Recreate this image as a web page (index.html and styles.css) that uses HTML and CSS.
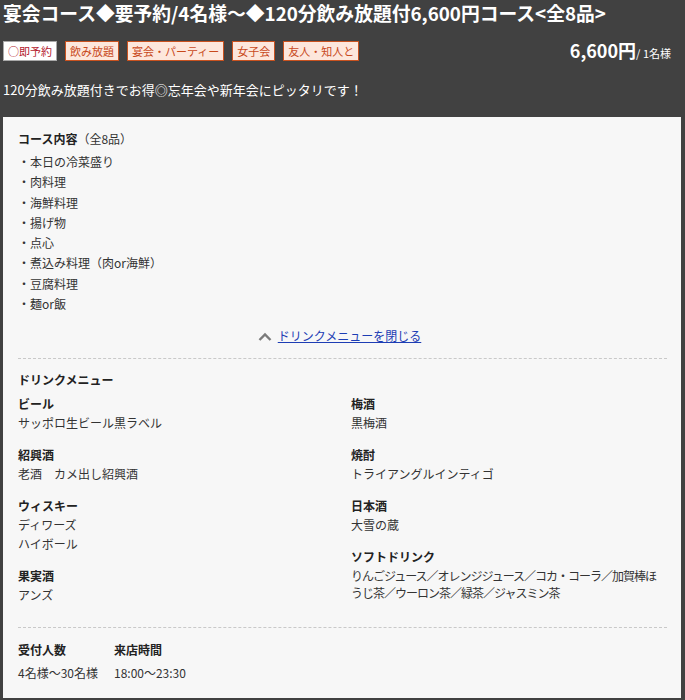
FILE: index.html
```html
<!DOCTYPE html>
<html lang="ja">
<head>
<meta charset="utf-8">
<title>宴会コース</title>
<link rel="stylesheet" href="styles.css">
</head>
<body>
<div class="page">
  <h1 class="title">宴会コース◆要予約/4名様～◆120分飲み放題付6,600円コース&lt;全8品&gt;</h1>
  <div class="tagrow">
    <ul class="tags">
      <li class="tag tag-reserve">○即予約</li>
      <li class="tag">飲み放題</li>
      <li class="tag">宴会・パーティー</li>
      <li class="tag">女子会</li>
      <li class="tag">友人・知人と</li>
    </ul>
    <div class="price"><span class="price-num">6,600円</span><span class="price-unit">/ 1名様</span></div>
  </div>
  <p class="desc">120分飲み放題付きでお得◎忘年会や新年会にピッタリです！</p>

  <div class="box">
    <h2 class="heading">コース内容<span class="heading-sub">（全8品）</span></h2>
    <ul class="course">
      <li>・本日の冷菜盛り</li>
      <li>・肉料理</li>
      <li>・海鮮料理</li>
      <li>・揚げ物</li>
      <li>・点心</li>
      <li>・煮込み料理（肉or海鮮）</li>
      <li>・豆腐料理</li>
      <li>・麺or飯</li>
    </ul>
    <div class="toggle">
      <svg class="chev" width="14" height="9" viewBox="0 0 14 9"><polyline points="1.5,8 7,2.5 12.5,8" fill="none" stroke="#7a7a7a" stroke-width="2.4"/></svg>
      <a href="#" class="toggle-link">ドリンクメニューを閉じる</a>
    </div>
    <hr class="divider">
    <h3 class="drink-title">ドリンクメニュー</h3>
    <div class="drinks">
      <div class="drink-col">
        <div class="group"><div class="g-head">ビール</div><div class="g-item">サッポロ生ビール黒ラベル</div></div>
        <div class="group"><div class="g-head">紹興酒</div><div class="g-item">老酒　カメ出し紹興酒</div></div>
        <div class="group"><div class="g-head">ウィスキー</div><div class="g-item">ディワーズ</div><div class="g-item">ハイボール</div></div>
        <div class="group"><div class="g-head">果実酒</div><div class="g-item">アンズ</div></div>
      </div>
      <div class="drink-col">
        <div class="group"><div class="g-head">梅酒</div><div class="g-item">黒梅酒</div></div>
        <div class="group"><div class="g-head">焼酎</div><div class="g-item">トライアングルインティゴ</div></div>
        <div class="group"><div class="g-head">日本酒</div><div class="g-item">大雪の蔵</div></div>
        <div class="group"><div class="g-head">ソフトドリンク</div><div class="g-item g-long">りんごジュース／オレンジジュース／コカ・コーラ／加賀棒ほうじ茶／ウーロン茶／緑茶／ジャスミン茶</div></div>
      </div>
    </div>
    <hr class="divider divider-foot">
    <div class="info">
      <div class="info-col"><div class="info-head">受付人数</div><div class="info-val">4名様～30名様</div></div>
      <div class="info-col"><div class="info-head">来店時間</div><div class="info-val">18:00～23:30</div></div>
    </div>
  </div>
</div>
</body>
</html>
```
FILE: styles.css
```css
* { box-sizing: border-box; }
html, body { margin: 0; padding: 0; }
body {
  background: #414141;
  font-family: "Noto Sans CJK JP", "Noto Sans", sans-serif;
  color: #333;
  font-size: 12px;
}
.page { padding: 0 4px 3px 3px; }
.title {
  margin: 0;
  color: #fff;
  font-size: 18.8px;
  font-weight: bold;
  line-height: 26px;
  white-space: nowrap;
}
.tagrow {
  display: flex;
  justify-content: space-between;
  align-items: center;
  margin-top: 15px;
  height: 20px;
}
.tags {
  display: flex;
  gap: 8px;
  list-style: none;
  margin: 0;
  padding: 0;
}
.tag {
  height: 20px;
  line-height: 18px;
  padding: 0 4px;
  font-size: 11px;
  color: #c8491b;
  background: #fde7dc;
  border: 1px solid #c9521f;
}
.tag-reserve {
  background: #fff;
  border-color: #a9a9a9;
  color: #b3182d;
}
.price {
  color: #fff;
  padding-right: 10px;
  white-space: nowrap;
  line-height: 20px;
}
.price-num { font-size: 18px; font-weight: bold; }
.price-unit { font-size: 11px; }
.desc {
  margin: 19px 0 0;
  color: #fff;
  font-size: 13px;
  line-height: 20px;
}
.box {
  margin-top: 17px;
  background: #f7f7f7;
  padding: 12px 14px 17px 15px;
}
.heading {
  margin: 0;
  font-size: 12px;
  font-weight: bold;
  line-height: 20px;
  color: #222;
}
.heading-sub { font-weight: normal; color: #333; }
.course {
  list-style: none;
  margin: 3px 0 0;
  padding: 0;
}
.course li { line-height: 20.3px; }
.toggle {
  margin-top: 12px;
  display: flex;
  justify-content: center;
  align-items: center;
  gap: 6px;
  line-height: 20px;
  padding-right: 6px;
}
.chev { display: block; margin-top: 1px; }
.toggle-link { color: #1d3db4; text-decoration: underline; }
.divider {
  margin: 12px 0 0;
  border: 0;
  border-top: 1px dashed #c9c9c9;
  height: 0;
}
.drink-title {
  margin: 12px 0 0;
  font-size: 12px;
  font-weight: bold;
  line-height: 17px;
  color: #222;
}
.drinks {
  display: grid;
  grid-template-columns: 1fr 1fr;
  column-gap: 17px;
  margin-top: 7px;
}
.drink-col {
  display: flex;
  flex-direction: column;
  gap: 14px;
}
.g-head {
  font-weight: bold;
  line-height: 17px;
  margin-bottom: 1px;
  color: #222;
}
.g-item { line-height: 17px; padding: 1px 0; }
.g-long { letter-spacing: -1px; }
.divider-foot { margin-top: 23px; }
.info {
  display: flex;
  gap: 16px;
  margin-top: 13px;
}
.info-head { font-weight: bold; line-height: 17px; color: #222; }
.info-val { line-height: 17px; margin-top: 6px; }
```
